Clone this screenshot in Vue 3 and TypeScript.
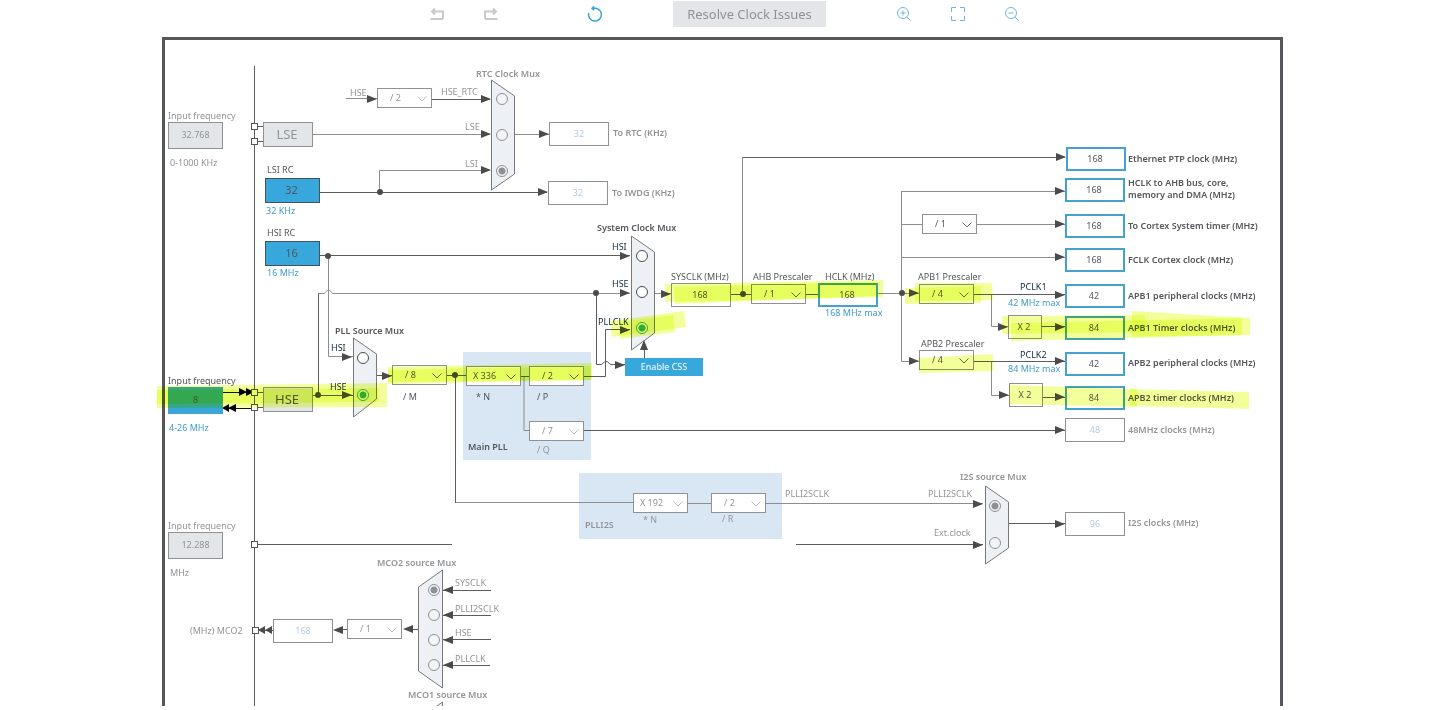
<script setup lang="ts">
import { reactive } from 'vue'

type Tone = 'muted' | 'ink' | 'navy' | 'blue'
interface Caption { x: number; y: number; text: string; tone: Tone; strong?: boolean; target?: string }
interface Field { id: string; x: number; y: number; w: number; h: number; value: string; kind: string; name: string }
interface Divider { id: string; x: number; y: number; value: string; options: string[]; off?: boolean; wide?: boolean; name: string }
interface Choice { id: string; x: number; y: number; group: string; value: string; kind: string; name: string }
interface Arrow { x: number; y: number; dir: 'right' | 'left' | 'up' }

// Canvas coordinates start at the inner corner of the board frame.
const originX = 165
const originY = 40
const at = (x: number, y: number) => ({ left: `${x - originX}px`, top: `${y - originY}px` })
const box = (f: { x: number; y: number; w: number; h: number }) => ({ ...at(f.x, f.y), width: `${f.w}px`, height: `${f.h}px` })

const captions: Caption[] = [
  { x: 168, y: 116, text: 'Input frequency', tone: 'muted', target: 'lse-in' },
  { x: 170, y: 163, text: '0-1000 KHz', tone: 'muted' },
  { x: 267, y: 170, text: 'LSI RC', tone: 'ink', target: 'lsi' },
  { x: 266, y: 211, text: '32 KHz', tone: 'blue' },
  { x: 267, y: 233, text: 'HSI RC', tone: 'ink', target: 'hsi' },
  { x: 267, y: 273, text: '16 MHz', tone: 'blue' },
  { x: 168, y: 381, text: 'Input frequency', tone: 'ink', target: 'hse-in' },
  { x: 169, y: 428, text: '4-26 MHz', tone: 'blue' },
  { x: 168, y: 526, text: 'Input frequency', tone: 'muted', target: 'ext-in' },
  { x: 170, y: 573, text: 'MHz', tone: 'muted' },
  { x: 190, y: 631, text: '(MHz) MCO2', tone: 'muted', target: 'mco2' },
  { x: 350, y: 93, text: 'HSE', tone: 'muted', target: 'rtc-div' },
  { x: 441, y: 92, text: 'HSE_RTC', tone: 'muted', target: 'rtc-hse' },
  { x: 465, y: 127, text: 'LSE', tone: 'muted', target: 'rtc-lse' },
  { x: 465, y: 164, text: 'LSI', tone: 'muted', target: 'rtc-lsi' },
  { x: 476, y: 74, text: 'RTC Clock Mux', tone: 'muted', strong: true },
  { x: 613, y: 133, text: 'To RTC (KHz)', tone: 'muted', strong: true, target: 'rtc-out' },
  { x: 612, y: 193, text: 'To IWDG (KHz)', tone: 'muted', strong: true, target: 'iwdg-out' },
  { x: 597, y: 228, text: 'System Clock Mux', tone: 'ink', strong: true },
  { x: 612, y: 247, text: 'HSI', tone: 'navy', target: 'sys-hsi' },
  { x: 612, y: 284, text: 'HSE', tone: 'navy', target: 'sys-hse' },
  { x: 598, y: 322, text: 'PLLCLK', tone: 'navy', target: 'sys-pll' },
  { x: 335, y: 331, text: 'PLL Source Mux', tone: 'ink', strong: true },
  { x: 331, y: 348, text: 'HSI', tone: 'navy', target: 'pll-hsi' },
  { x: 330, y: 387, text: 'HSE', tone: 'navy', target: 'pll-hse' },
  { x: 403, y: 397, text: '/ M', tone: 'ink', target: 'div-m' },
  { x: 476, y: 397, text: '* N', tone: 'ink', target: 'mul-n' },
  { x: 537, y: 397, text: '/ P', tone: 'ink', target: 'div-p' },
  { x: 537, y: 450, text: '/ Q', tone: 'muted', target: 'div-q' },
  { x: 468, y: 447, text: 'Main PLL', tone: 'ink', strong: true },
  { x: 585, y: 525, text: 'PLLI2S', tone: 'muted', strong: true },
  { x: 643, y: 520, text: '* N', tone: 'muted', target: 'i2s-n' },
  { x: 722, y: 519, text: '/ R', tone: 'muted', target: 'i2s-r' },
  { x: 785, y: 494, text: 'PLLI2SCLK', tone: 'muted' },
  { x: 928, y: 494, text: 'PLLI2SCLK', tone: 'muted', target: 'i2s-pll' },
  { x: 934, y: 533, text: 'Ext.clock', tone: 'muted', target: 'i2s-ext' },
  { x: 960, y: 477, text: 'I2S source Mux', tone: 'muted', strong: true },
  { x: 671, y: 277, text: 'SYSCLK (MHz)', tone: 'ink', target: 'sysclk' },
  { x: 753, y: 277, text: 'AHB Prescaler', tone: 'ink', target: 'ahb' },
  { x: 825, y: 277, text: 'HCLK (MHz)', tone: 'ink', target: 'hclk' },
  { x: 825, y: 313, text: '168 MHz max', tone: 'blue' },
  { x: 918, y: 277, text: 'APB1 Prescaler', tone: 'ink', target: 'apb1' },
  { x: 921, y: 344, text: 'APB2 Prescaler', tone: 'ink', target: 'apb2' },
  { x: 1020, y: 287, text: 'PCLK1', tone: 'navy' },
  { x: 1008, y: 303, text: '42 MHz max', tone: 'blue' },
  { x: 1020, y: 355, text: 'PCLK2', tone: 'navy' },
  { x: 1008, y: 369, text: '84 MHz max', tone: 'blue' },
  { x: 1128, y: 159, text: 'Ethernet PTP clock (MHz)', tone: 'ink', strong: true, target: 'eth' },
  { x: 1128, y: 183, text: 'HCLK to AHB bus, core,\nmemory and DMA (MHz)', tone: 'ink', strong: true, target: 'ahb-out' },
  { x: 1128, y: 226, text: 'To Cortex System timer (MHz)', tone: 'ink', strong: true, target: 'cortex' },
  { x: 1128, y: 260, text: 'FCLK Cortex clock (MHz)', tone: 'ink', strong: true, target: 'fclk' },
  { x: 1128, y: 296, text: 'APB1 peripheral clocks (MHz)', tone: 'ink', strong: true, target: 'apb1-p' },
  { x: 1128, y: 328, text: 'APB1 Timer clocks (MHz)', tone: 'ink', strong: true, target: 'apb1-t' },
  { x: 1128, y: 363, text: 'APB2 peripheral clocks (MHz)', tone: 'ink', strong: true, target: 'apb2-p' },
  { x: 1128, y: 398, text: 'APB2 timer clocks (MHz)', tone: 'ink', strong: true, target: 'apb2-t' },
  { x: 1128, y: 430, text: '48MHz clocks (MHz)', tone: 'muted', strong: true, target: 'usb' },
  { x: 1128, y: 523, text: 'I2S clocks (MHz)', tone: 'muted', strong: true, target: 'i2s-out' },
  { x: 377, y: 563, text: 'MCO2 source Mux', tone: 'muted', strong: true },
  { x: 455, y: 583, text: 'SYSCLK', tone: 'muted', target: 'mco-sys' },
  { x: 455, y: 609, text: 'PLLI2SCLK', tone: 'muted', target: 'mco-i2s' },
  { x: 455, y: 633, text: 'HSE', tone: 'muted', target: 'mco-hse' },
  { x: 455, y: 659, text: 'PLLCLK', tone: 'muted', target: 'mco-pll' },
  { x: 408, y: 695, text: 'MCO1 source Mux', tone: 'muted', strong: true },
]

const fields = reactive<Field[]>([
  { id: 'lse-in', x: 168, y: 122, w: 55, h: 27, value: '32.768', kind: 'idle', name: 'LSE input frequency' },
  { id: 'lsi', x: 265, y: 178, w: 55, h: 25, value: '32', kind: 'source', name: 'LSI RC' },
  { id: 'hsi', x: 265, y: 241, w: 55, h: 25, value: '16', kind: 'source', name: 'HSI RC' },
  { id: 'hse-in', x: 168, y: 387, w: 55, h: 27, value: '8', kind: 'entry', name: 'HSE input frequency' },
  { id: 'ext-in', x: 168, y: 532, w: 55, h: 27, value: '12.288', kind: 'idle', name: 'External clock frequency' },
  { id: 'rtc-out', x: 549, y: 122, w: 60, h: 24, value: '32', kind: 'off', name: 'RTC clock' },
  { id: 'iwdg-out', x: 548, y: 181, w: 60, h: 24, value: '32', kind: 'off', name: 'IWDG clock' },
  { id: 'sysclk', x: 671, y: 283, w: 60, h: 24, value: '168', kind: 'plain', name: 'SYSCLK' },
  { id: 'hclk', x: 818, y: 283, w: 60, h: 24, value: '168', kind: 'active', name: 'HCLK' },
  { id: 'eth', x: 1066, y: 147, w: 60, h: 24, value: '168', kind: 'active', name: 'Ethernet PTP clock' },
  { id: 'ahb-out', x: 1065, y: 178, w: 60, h: 24, value: '168', kind: 'active', name: 'AHB clock' },
  { id: 'cortex', x: 1065, y: 214, w: 60, h: 24, value: '168', kind: 'active', name: 'Cortex timer' },
  { id: 'fclk', x: 1065, y: 248, w: 60, h: 24, value: '168', kind: 'active', name: 'FCLK' },
  { id: 'apb1-p', x: 1065, y: 284, w: 60, h: 24, value: '42', kind: 'active', name: 'APB1 peripheral clocks' },
  { id: 'apb1-x', x: 1008, y: 315, w: 34, h: 24, value: 'X 2', kind: 'plain', name: 'APB1 timer multiplier' },
  { id: 'apb1-t', x: 1065, y: 316, w: 60, h: 24, value: '84', kind: 'active', name: 'APB1 timer clocks' },
  { id: 'apb2-p', x: 1065, y: 352, w: 60, h: 24, value: '42', kind: 'active', name: 'APB2 peripheral clocks' },
  { id: 'apb2-x', x: 1009, y: 383, w: 34, h: 24, value: 'X 2', kind: 'plain', name: 'APB2 timer multiplier' },
  { id: 'apb2-t', x: 1065, y: 386, w: 60, h: 24, value: '84', kind: 'active', name: 'APB2 timer clocks' },
  { id: 'usb', x: 1065, y: 418, w: 60, h: 24, value: '48', kind: 'off', name: '48MHz clocks' },
  { id: 'i2s-out', x: 1065, y: 512, w: 60, h: 24, value: '96', kind: 'off', name: 'I2S clocks' },
  { id: 'mco2', x: 273, y: 619, w: 60, h: 24, value: '168', kind: 'off', name: 'MCO2' },
])

const steps = ['/ 1', '/ 2', '/ 4', '/ 8', '/ 16']
const dividers = reactive<Divider[]>([
  { id: 'rtc-div', x: 377, y: 88, value: '/ 2', options: steps, off: true, name: 'HSE RTC divider' },
  { id: 'div-m', x: 392, y: 365, value: '/ 8', options: steps, name: 'PLL M' },
  { id: 'mul-n', x: 466, y: 366, value: 'X 336', options: ['X 192', 'X 336'], wide: true, name: 'PLL N' },
  { id: 'div-p', x: 529, y: 366, value: '/ 2', options: steps, name: 'PLL P' },
  { id: 'div-q', x: 529, y: 421, value: '/ 7', options: ['/ 6', '/ 7', '/ 8'], off: true, name: 'PLL Q' },
  { id: 'i2s-n', x: 633, y: 493, value: 'X 192', options: ['X 192', 'X 336'], off: true, wide: true, name: 'PLLI2S N' },
  { id: 'i2s-r', x: 711, y: 493, value: '/ 2', options: steps, off: true, name: 'PLLI2S R' },
  { id: 'ahb', x: 751, y: 284, value: '/ 1', options: steps, name: 'AHB prescaler' },
  { id: 'apb1', x: 919, y: 284, value: '/ 4', options: steps, name: 'APB1 prescaler' },
  { id: 'systick', x: 922, y: 214, value: '/ 1', options: steps, name: 'Cortex timer prescaler' },
  { id: 'apb2', x: 919, y: 350, value: '/ 4', options: steps, name: 'APB2 prescaler' },
  { id: 'mco-div', x: 347, y: 619, value: '/ 1', options: steps, off: true, name: 'MCO2 prescaler' },
])

const selected = reactive<Record<string, string>>({ rtc: 'lsi', sys: 'pll', pll: 'hse', i2s: 'pll', mco: 'sys' })
const choices: Choice[] = [
  { id: 'rtc-hse', x: 502, y: 99, group: 'rtc', value: 'hse', kind: 'dim', name: 'HSE_RTC' },
  { id: 'rtc-lse', x: 502, y: 135, group: 'rtc', value: 'lse', kind: 'dim', name: 'LSE' },
  { id: 'rtc-lsi', x: 502, y: 171, group: 'rtc', value: 'lsi', kind: 'dim', name: 'LSI' },
  { id: 'sys-hsi', x: 642, y: 256, group: 'sys', value: 'hsi', kind: 'live', name: 'HSI' },
  { id: 'sys-hse', x: 642, y: 292, group: 'sys', value: 'hse', kind: 'live', name: 'HSE' },
  { id: 'sys-pll', x: 642, y: 328, group: 'sys', value: 'pll', kind: 'live', name: 'PLLCLK' },
  { id: 'pll-hsi', x: 363, y: 358, group: 'pll', value: 'hsi', kind: 'live', name: 'HSI' },
  { id: 'pll-hse', x: 363, y: 395, group: 'pll', value: 'hse', kind: 'live', name: 'HSE' },
  { id: 'i2s-pll', x: 995, y: 506, group: 'i2s', value: 'pll', kind: 'dim', name: 'PLLI2SCLK' },
  { id: 'i2s-ext', x: 995, y: 543, group: 'i2s', value: 'ext', kind: 'dim', name: 'External clock' },
  { id: 'mco-sys', x: 434, y: 590, group: 'mco', value: 'sys', kind: 'dim', name: 'SYSCLK' },
  { id: 'mco-i2s', x: 434, y: 615, group: 'mco', value: 'i2s', kind: 'dim', name: 'PLLI2SCLK' },
  { id: 'mco-hse', x: 434, y: 640, group: 'mco', value: 'hse', kind: 'dim', name: 'HSE' },
  { id: 'mco-pll', x: 434, y: 665, group: 'mco', value: 'pll', kind: 'dim', name: 'PLLCLK' },
]

const darkWires = [
  'M254.5 66V720', 'M257 126.5H263M257 141.5H263M257 392.5H263M257 407.5H263',
  'M431 99.5H490', 'M320 192.5H547', 'M320 255.5H630', 'M318.5 395V293.5', 'M313 395.5H353',
  'M377 375.5H392', 'M447 375.5H466', 'M455.5 375V503', 'M520 376.5H529', 'M584 430.5H1065',
  'M584 376.5H605.5V329.5H630', 'M596.5 293V364.5H601C603 364.5 603 361.5 606 361.5C609 361.5 609 364.5 611 364.5H625',
  'M644.5 358V345', 'M731 294.5H751', 'M743 157.5H1065', 'M806 294.5H818',
  'M974 294.5H1065', 'M974 361.5H1065', 'M1042 326.5H1065', 'M1043 397.5H1065',
  'M796 544.5H983', 'M1009 523.5H1065', 'M254 544.5H452', 'M410 629.5H419',
  'M443 590.5H491', 'M443 615.5H491', 'M443 639.5H491', 'M443 665.5H490', 'M340 629.5H347',
]
const softWires = [
  'M346 98.5H377', 'M313 134.5H490', 'M379.5 192V170.5H490', 'M515 134.5H549', 'M328.5 256V356.5H353',
  'M318 293.5H324C326 293.5 325 290.5 328.5 290.5C332 290.5 331 293.5 333 293.5H630', 'M455 502.5H633',
  'M524 376V430.5H529', 'M654 293.5H671', 'M742.5 294V157', 'M878 293.5H919', 'M901.5 191V361.5H919',
  'M901 191.5H1065', 'M901 224.5H922', 'M976 224.5H1065', 'M901 257.5H1065',
  'M991.5 294V326.5H1008', 'M991.5 361V395.5H1009', 'M688 503.5H711', 'M766 503.5H983',
]
const dots = [[380, 192], [328, 256], [318, 395], [455, 375], [596, 293], [743, 294], [902, 293]]
const pads = [[254, 126], [254, 141], [254, 392], [254, 407], [254, 544], [255, 630]]
const arrows: Arrow[] = [
  { x: 377, y: 99, dir: 'right' }, { x: 491, y: 99, dir: 'right' }, { x: 491, y: 134, dir: 'right' }, { x: 491, y: 170, dir: 'right' },
  { x: 549, y: 134, dir: 'right' }, { x: 548, y: 192, dir: 'right' }, { x: 630, y: 256, dir: 'right' }, { x: 630, y: 293, dir: 'right' },
  { x: 630, y: 330, dir: 'right' }, { x: 625, y: 365, dir: 'right' }, { x: 352, y: 357, dir: 'right' }, { x: 352, y: 395, dir: 'right' },
  { x: 392, y: 376, dir: 'right' }, { x: 671, y: 294, dir: 'right' }, { x: 919, y: 293, dir: 'right' }, { x: 919, y: 361, dir: 'right' },
  { x: 1008, y: 327, dir: 'right' }, { x: 1009, y: 395, dir: 'right' }, { x: 1066, y: 157, dir: 'right' }, { x: 1065, y: 191, dir: 'right' },
  { x: 1065, y: 224, dir: 'right' }, { x: 1065, y: 257, dir: 'right' }, { x: 1065, y: 295, dir: 'right' }, { x: 1065, y: 327, dir: 'right' },
  { x: 1065, y: 361, dir: 'right' }, { x: 1065, y: 397, dir: 'right' }, { x: 1065, y: 430, dir: 'right' }, { x: 983, y: 504, dir: 'right' },
  { x: 983, y: 545, dir: 'right' }, { x: 1065, y: 524, dir: 'right' }, { x: 644, y: 340, dir: 'up' },
  { x: 443, y: 590, dir: 'left' }, { x: 443, y: 615, dir: 'left' }, { x: 443, y: 640, dir: 'left' }, { x: 443, y: 665, dir: 'left' },
  { x: 403, y: 629, dir: 'left' }, { x: 333, y: 630, dir: 'left' },
]
function head(a: Arrow): string {
  const { x, y } = a
  if (a.dir === 'right') return `${x},${y} ${x - 10},${y - 4} ${x - 10},${y + 4}`
  if (a.dir === 'left') return `${x},${y} ${x + 10},${y - 4} ${x + 10},${y + 4}`
  return `${x},${y} ${x - 4},${y + 10} ${x + 4},${y + 10}`
}
const doubleHeads = ['247,392 239,388 239,396', '254,392 246,388 246,396', '222,408 229,404 229,412', '228,408 236,404 236,412']
const muxes = [
  '491.5,80 514.5,96 514.5,174 491.5,190', '631.5,236 654.5,252 654.5,333 631.5,350',
  '353.5,338 376.5,354 376.5,399 353.5,417', '985.5,486 1008.5,502 1008.5,548 985.5,564',
  '442.5,570 418.5,587 418.5,671 442.5,688', '442.5,702 418.5,719 418.5,803 442.5,820',
]
const marks = [
  '157,386 387,383 387,407 157,408', '157,390 379,388 379,402 157,404',
  '388,367 592,363 592,380 388,384', '388,370 591,366 591,380 388,382',
  '610,321 684,311 686,327 612,337', '619,322 673,315 675,332 620,339',
  '665,284 883,280 883,297 665,302', '674,287 876,282 876,296 675,304',
  '915,283 992,283 993,300 915,301', '905,288 981,286 981,303 905,304',
  '919,358 993,354 993,371 919,373',
  '1002,316 1145,315 1145,332 1002,334', '1011,323 1242,318 1242,335 1011,341', '1132,311 1250,318 1250,335 1132,337',
  '1009,385 1137,389 1137,407 1009,404', '1130,389 1249,392 1249,409 1130,406',
]
</script>

<template>
  <main class="page">
    <nav class="toolbar" aria-label="Clock tools">
      <div class="group">
        <button class="tool faded" aria-label="Undo">
          <svg viewBox="0 0 16 16"><path d="M6 2.500L3 5.500l3 3M3 5.500h11v7M1.500 13h13" /></svg>
        </button>
        <button class="tool faded" aria-label="Redo">
          <svg viewBox="0 0 16 16"><path d="M10 2.500l3 3-3 3M13 5.500H2v7M1.500 13h13" /></svg>
        </button>
      </div>
      <button class="tool reset" aria-label="Reset clocks">
        <svg viewBox="0 0 16 16"><path d="M1.800 7A6.400 6.400 0 1 0 7.500 2.300M9 2.300H5M7.200 .3L5 2.300 7.200 4.300" /></svg>
      </button>
      <button class="resolve">Resolve Clock Issues</button>
      <div class="group">
        <button class="tool" aria-label="Zoom in">
          <svg viewBox="0 0 16 16"><circle cx="7" cy="7" r="5.500" /><path d="M11 11l3.500 3.500M4.500 7h5M7 4.500v5" /></svg>
        </button>
        <button class="tool" aria-label="Fit to window">
          <svg viewBox="0 0 16 16"><path d="M1.500 6V1.500h4.500M10 1.500h4.500V6M14.500 10V14.500h-4.500M6 14.500H1.500V10" /></svg>
        </button>
        <button class="tool" aria-label="Zoom out">
          <svg viewBox="0 0 16 16"><circle cx="7" cy="7" r="5.500" /><path d="M11 11l3.500 3.500M4.500 7h5" /></svg>
        </button>
      </div>
    </nav>

    <div class="stage">
      <section class="board" aria-label="Clock tree">
        <svg class="layer" viewBox="165 40 1115 680" width="1115" height="680" aria-hidden="true">
          <rect class="zone" x="463" y="352" width="128" height="108" />
          <rect class="zone" x="579" y="473" width="203" height="66" />
          <path v-for="d in softWires" :key="d" :d="d" class="wire soft" />
          <path v-for="d in darkWires" :key="d" :d="d" class="wire" />
          <path class="wire black" d="M223 392.500H251M228 408.500H251" />
          <path class="wire" d="M258 630.500H273" />
          <polygon v-for="p in muxes" :key="p" :points="p" class="mux" />
          <polygon v-for="a in arrows" :key="`${a.x}-${a.y}`" :points="head(a)" class="tip" />
          <polygon v-for="p in doubleHeads" :key="p" :points="p" class="tip black" />
          <polygon class="tip" points="258,630 265,626 265,634" />
          <polygon class="tip" points="265,630 272,626 272,634" />
          <circle v-for="d in dots" :key="d.join()" :cx="d[0]" :cy="d[1]" r="3" class="tip" />
          <rect v-for="p in pads" :key="p.join()" :x="p[0] - 2.5" :y="p[1] - 2.5" width="6" height="6" class="pad" />
        </svg>

        <input
          v-for="f in fields" :id="f.id" :key="f.id" v-model="f.value" type="text"
          class="field" :class="f.kind" :style="box(f)" :aria-label="f.name"
        />
        <button class="osc idle" :style="box({ x: 263, y: 122, w: 50, h: 25 })">LSE</button>
        <button class="osc" :style="box({ x: 263, y: 387, w: 50, h: 25 })">HSE</button>
        <button class="css" :style="box({ x: 625, y: 358, w: 78, h: 18 })">Enable CSS</button>

        <div v-for="d in dividers" :key="d.id" class="divider" :class="{ off: d.off, wide: d.wide }" :style="at(d.x, d.y)">
          <select :id="d.id" v-model="d.value" :aria-label="d.name">
            <option v-for="o in d.options" :key="o">{{ o }}</option>
          </select>
          <svg viewBox="0 0 10 6" aria-hidden="true"><path d="M.5 .5L5 5 9.500 .5" /></svg>
        </div>

        <input
          v-for="c in choices" :id="c.id" :key="c.id" v-model="selected[c.group]" type="radio"
          :name="c.group" :value="c.value" class="choice" :class="c.kind"
          :style="at(c.x - 6, c.y - 6)" :aria-label="c.name"
        />

        <component
          :is="c.target ? 'label' : 'span'" v-for="c in captions" :key="`${c.x}-${c.y}`" :for="c.target"
          class="caption" :class="[c.tone, { strong: c.strong }]" :style="at(c.x, c.y - 6)"
        >{{ c.text }}</component>

        <svg class="layer marker" viewBox="165 40 1115 680" width="1115" height="680" aria-hidden="true">
          <polygon v-for="m in marks" :key="m" :points="m" />
        </svg>
      </section>
    </div>
  </main>
</template>

<style>
body { margin: 0; background: #fff; }
</style>

<style scoped>
.page {
  box-sizing: border-box;
  height: 100vh;
  padding-bottom: 4px;
  display: flex;
  flex-direction: column;
  font: 9px/12px "Noto Sans", "Open Sans", sans-serif;
  color: #54565a;
}
.page * { box-sizing: border-box; }
button, input, select { margin: 0; padding: 0; border-radius: 0; font: inherit; color: inherit; }
.toolbar {
  flex: none;
  height: 37px;
  padding: 1px 147px 0 166px;
  display: flex;
  align-items: flex-start;
  justify-content: center;
  gap: 70px;
}
.group { display: flex; gap: 38px; }
.tool { width: 16px; height: 26px; border: 0; background: none; display: flex; align-items: center; }
.tool svg { width: 16px; height: 16px; fill: none; stroke: #6bb9e0; stroke-width: 1; }
.tool.faded svg { stroke: #c9c9c9; stroke-width: 2; }
.tool.reset { margin-left: 18px; }
.tool.reset svg { stroke: #3ba3d6; stroke-width: 1.5; }
.resolve { height: 26px; padding: 0 14px; border: 0; background: #e3e5e8; color: #8f9295; font-size: 13px; }

.stage { flex: 1; min-height: 0; padding: 0 147px 0 162px; overflow: hidden; }
.board { position: relative; height: 720px; border: 3px solid #54565a; }
.layer { position: absolute; top: 0; left: 0; overflow: visible; pointer-events: none; }
.marker { mix-blend-mode: multiply; }
.marker polygon { fill: #f3ff9b; mix-blend-mode: multiply; }
.zone { fill: #d9e7f4; }
.wire { fill: none; stroke: #5c5c5e; }
.wire.soft { stroke: #8d8d8f; }
.wire.black { stroke: #111; }
.tip { fill: #4b4b4d; }
.tip.black { fill: #000; }
.mux { fill: #edf0f4; stroke: #77797c; }
.pad { fill: #fff; stroke: #54565a; }

.field, .osc, .css, .divider, .choice, .caption { position: absolute; }
.field { padding-bottom: 2px; border: 1px solid #8f9194; background: #fff; text-align: center; }
.field.off { color: #b5cbe0; }
.field.active { padding-right: 2px; border: 2px solid #45a2cf; }
.field.plain { padding-right: 2px; }
.field.idle { background: #e3e6e9; color: #929497; }
.field.entry { border-color: #45a2cf; background: #38a8dc; }
.field.source { padding-right: 2px; border-color: #44525c; background: #38a8dc; font-size: 11px; }
.osc { padding-bottom: 2px; padding-right: 2px; border: 1px solid #8f9194; background: #e3e6e9; font-size: 13px; }
.osc.idle { color: #929497; }
.css { border: 0; background: #38a8dc; color: #fff; }
.divider { width: 55px; height: 20px; }
.divider select {
  appearance: none;
  width: 100%;
  height: 100%;
  padding-left: 12px;
  border: 1px solid #8f9194;
  background: #fff;
}
.divider.wide select { padding-left: 6px; }
.divider svg { position: absolute; right: 5px; top: 8px; width: 10px; height: 6px; fill: none; stroke: #65676a; pointer-events: none; }
.divider.off { color: #929497; }
.divider.off svg { stroke: #c0c1c3; }
.choice { appearance: none; width: 12px; height: 12px; border: 1px solid #4b4b4d; border-radius: 50%; background: #fff; }
.choice.dim { border-color: #8f9194; background: #f2f4f7; }
.choice.dim:checked { background: radial-gradient(circle, #8f9194 3px, #f2f4f7 4px); }
.choice.live:checked { border-color: #35a890; background: radial-gradient(circle, #35a890 3px, #fff 4px); }
.caption { white-space: pre; }
.caption.ink { color: #54565a; }
.caption.muted { color: #929497; }
.caption.navy { color: #102a43; }
.caption.blue { color: #3d9dcb; }
.caption.strong { font-weight: 600; }
</style>
